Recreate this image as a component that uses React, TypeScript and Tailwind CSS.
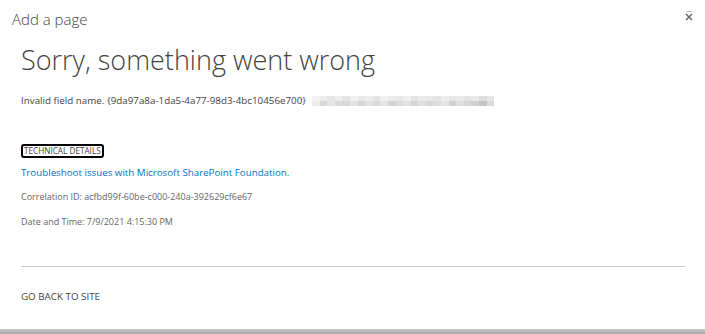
import React from "react";

const blurTop = [
  "#f2f2f2", "#ececec", "#e6e6e6", "#eeeeee", "#e4e4e4", "#f0f0f0", "#e9e9e9", "#eeeeee",
  "#e6e6e6", "#f1f1f1", "#eaeaea", "#e8e8e8", "#f0f0f0", "#e5e5e5", "#ececec", "#e9e9e9",
  "#e4e4e4", "#eeeeee", "#e7e7e7", "#ebebeb", "#e2e2e2", "#e9e9e9", "#dedede", "#e6e6e6",
];
const blurBottom = [
  "#ececec", "#d9d9d9", "#e6e6e6", "#dcdcdc", "#d8d8d8", "#e4e4e4", "#d6d6d6", "#e2e2e2",
  "#dadada", "#e6e6e6", "#d4d4d4", "#dcdcdc", "#e2e2e2", "#d6d6d6", "#e0e0e0", "#d8d8d8",
  "#dcdcdc", "#e4e4e4", "#d2d2d2", "#dedede", "#d6d6d6", "#d0d0d0", "#c4c4c4", "#dcdcdc",
];

const App: React.FC = () => {
  return (
    <div className="flex h-[334px] w-[705px] flex-col overflow-hidden bg-white font-['Open_Sans',sans-serif] text-[#444]">
      <div className="relative flex-1">
        <div className="px-3 pt-[9px] text-[15px] font-light leading-5 text-[#444]">Add a page</div>
        <button className="absolute right-[8px] top-[8px] flex h-4 w-4 items-center justify-center">
          <svg width="10" height="12" viewBox="0 0 10 12">
            <path d="M2.5 1.5h5" stroke="#bbb" strokeWidth="1" />
            <path d="M2 4l6 6M8 4l-6 6" stroke="#666" strokeWidth="1.5" />
          </svg>
        </button>

        <div className="px-[21px]">
          <h1 className="mt-[11px] text-[27px] font-light leading-[40px] text-[#444]">
            Sorry, something went wrong
          </h1>
          <div className="mt-[13px] flex items-center text-[9.8px] leading-4 text-[#444]">
            <span>Invalid field name. {"{9da97a8a-1da5-4a77-98d3-4bc10456e700}"}</span>
            <span className="ml-[6px] flex h-[10px] flex-col">
              <span className="flex h-[5px]">
                {blurTop.map((c, i) => (
                  <span key={i} className="h-full w-[7.6px]" style={{ background: c }} />
                ))}
              </span>
              <span className="flex h-[5px]">
                {blurBottom.map((c, i) => (
                  <span key={i} className="h-full w-[7.6px]" style={{ background: c }} />
                ))}
              </span>
            </span>
          </div>

          <div className="mt-[31px] leading-none">
            <span className="inline-block rounded-[3px] border-2 border-black px-[1px] text-[8.2px] leading-[10px] text-[#444]">
              TECHNICAL DETAILS
            </span>
          </div>
          <div className="mt-[7px] text-[9.75px] leading-4 text-[#0072c6]">
            Troubleshoot issues with Microsoft SharePoint Foundation.
          </div>
          <div className="mt-[8px] text-[9px] leading-4 text-[#666]">
            Correlation ID: acfbd99f-60be-c000-240a-392629cf6e67
          </div>
          <div className="mt-[9px] text-[9px] leading-4 text-[#666]">Date and Time: 7/9/2021 4:15:30 PM</div>

          <div className="mt-[36px] h-px w-[664px] bg-[#c8c8c8]" />
          <div className="mt-[22px] text-[9.8px] leading-4 text-[#444]">GO BACK TO SITE</div>
        </div>
      </div>
      <div className="h-[5px] bg-gradient-to-b from-[#c8c8c8] to-[#a6a6a6]" />
    </div>
  );
};

export default App;
